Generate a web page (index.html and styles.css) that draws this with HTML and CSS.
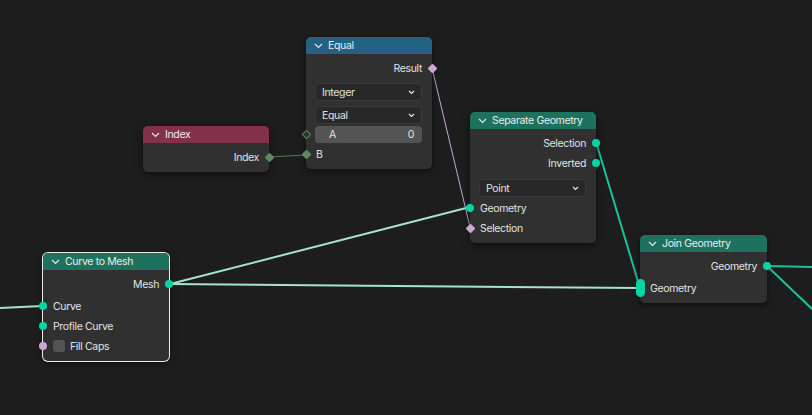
FILE: index.html
```html
<!DOCTYPE html>
<html>
<head>
<meta charset="utf-8">
<link rel="stylesheet" href="styles.css">
</head>
<body>
<div class="canvas">
  <svg class="links" width="812" height="415" viewBox="0 0 812 415">
    <line x1="0" y1="308" x2="42" y2="306" class="l-hi"/>
    <line x1="170" y1="284" x2="470" y2="207" class="l-hi"/>
    <line x1="170" y1="284" x2="640" y2="288" class="l-hi"/>
    <line x1="432" y1="68" x2="470" y2="227" class="l-bool"/>
    <line x1="269" y1="157" x2="306" y2="155" class="l-int"/>
    <line x1="596" y1="142" x2="640" y2="288" class="l-geo"/>
    <line x1="767" y1="266" x2="812" y2="267" class="l-geo"/>
    <line x1="767" y1="266" x2="812" y2="309" class="l-geo"/>
  </svg>

  <!-- Equal -->
  <div class="node n-equal">
    <div class="hdr hdr-conv"><svg class="chev" width="9" height="6" viewBox="0 0 9 6"><path d="M1 1 L4.5 4.5 L8 1"/></svg>Equal</div>
    <div class="body">
      <div class="row out">Result<span class="sock diamond s-bool out-s"></span></div>
      <div class="dd dd-first">Integer<svg class="dchev" width="7" height="5" viewBox="0 0 7 5"><path d="M1 1 L3.5 3.5 L6 1"/></svg></div>
      <div class="dd">Equal<svg class="dchev" width="7" height="5" viewBox="0 0 7 5"><path d="M1 1 L3.5 3.5 L6 1"/></svg></div>
      <div class="frow"><span class="sock diamond hollow in-s"></span><div class="field"><span>A</span><span>0</span></div></div>
      <div class="row">B<span class="sock diamond s-int in-s"></span></div>
    </div>
  </div>

  <!-- Index -->
  <div class="node n-index">
    <div class="hdr hdr-input"><svg class="chev" width="9" height="6" viewBox="0 0 9 6"><path d="M1 1 L4.5 4.5 L8 1"/></svg>Index</div>
    <div class="body">
      <div class="row out">Index<span class="sock diamond s-int out-s"></span></div>
    </div>
  </div>

  <!-- Separate Geometry -->
  <div class="node n-sep">
    <div class="hdr hdr-geo"><svg class="chev" width="9" height="6" viewBox="0 0 9 6"><path d="M1 1 L4.5 4.5 L8 1"/></svg>Separate Geometry</div>
    <div class="body">
      <div class="row out">Selection<span class="sock s-geo out-s"></span></div>
      <div class="row out">Inverted<span class="sock s-geo out-s"></span></div>
      <div class="dd dd-sep">Point<svg class="dchev" width="7" height="5" viewBox="0 0 7 5"><path d="M1 1 L3.5 3.5 L6 1"/></svg></div>
      <div class="row">Geometry<span class="sock s-geo in-s"></span></div>
      <div class="row">Selection<span class="sock diamond s-bool in-s"></span></div>
    </div>
  </div>

  <!-- Curve to Mesh -->
  <div class="node n-ctm selected">
    <div class="hdr hdr-geo"><svg class="chev" width="9" height="6" viewBox="0 0 9 6"><path d="M1 1 L4.5 4.5 L8 1"/></svg>Curve to Mesh</div>
    <div class="body">
      <div class="row out">Mesh<span class="sock s-geo out-s"></span></div>
      <div class="row gap-in">Curve<span class="sock s-geo in-s"></span></div>
      <div class="row">Profile Curve<span class="sock s-geo in-s"></span></div>
      <div class="row"><span class="check"></span>Fill Caps<span class="sock s-bool in-s"></span></div>
    </div>
  </div>

  <!-- Join Geometry -->
  <div class="node n-join">
    <div class="hdr hdr-geo"><svg class="chev" width="9" height="6" viewBox="0 0 9 6"><path d="M1 1 L4.5 4.5 L8 1"/></svg>Join Geometry</div>
    <div class="body">
      <div class="row out">Geometry<span class="sock s-geo out-s"></span></div>
      <div class="row gap-in">Geometry<span class="sock pill s-geo"></span></div>
    </div>
  </div>
</div>
</body>
</html>
```

FILE: styles.css
```css
* { box-sizing: border-box; }
html, body { margin: 0; padding: 0; }
body {
  background: #1d1d1d;
  font-family: Inter, "Noto Sans", "DejaVu Sans", sans-serif;
  font-size: 10.5px;
  letter-spacing: -0.35px;
  color: #e2e2e2;
}
.canvas {
  position: relative;
  width: 812px;
  height: 415px;
  overflow: hidden;
  background: #1d1d1d;
}
.links { position: absolute; left: 0; top: 0; }
.links line { stroke-linecap: round; }
.l-hi { stroke: #a6e3cc; stroke-width: 2; }
.l-geo { stroke: #19c39a; stroke-width: 2; }
.l-bool { stroke: #c9a8d4; stroke-width: 1; }
.l-int { stroke: #55795a; stroke-width: 1.2; }

.node {
  position: absolute;
  width: 126px;
  background: #303030;
  border-radius: 5px;
  box-shadow: 0 2px 7px rgba(0,0,0,0.55);
}
.node.selected { box-shadow: 0 0 0 1px #ececec, 0 2px 7px rgba(0,0,0,0.55); }
.n-equal { left: 306px; top: 37px; }
.n-index { left: 143px; top: 126px; }
.n-sep { left: 470px; top: 112px; }
.n-ctm { left: 43px; top: 253px; width: 126px; }
.n-join { left: 640px; top: 235px; width: 127px; }

.hdr {
  height: 17px;
  display: flex;
  align-items: center;
  gap: 5px;
  padding-left: 8px;
  border-radius: 5px 5px 0 0;
  color: #ececec;
}
.hdr-conv { background: #246283; }
.hdr-input { background: #83314a; }
.hdr-geo { background: #1d725e; }
.chev path, .dchev path { fill: none; stroke: #e6e6e6; stroke-width: 1.2; }
.chev { flex: none; }

.body {
  display: flex;
  flex-direction: column;
  padding: 4px 0 5px;
}
.row {
  position: relative;
  height: 20px;
  display: flex;
  align-items: center;
  padding: 0 10px;
}
.row.out { justify-content: flex-end; }
.gap-in { margin-top: 2px; }

.sock {
  position: absolute;
  width: 8px;
  height: 8px;
  border-radius: 50%;
  top: 6px;
}
.in-s { left: -4px; }
.out-s { right: -4px; }
.s-geo { background: #00d6a3; }
.s-bool { background: #cca6d6; }
.s-int { background: #598c5c; }
.diamond {
  width: 7px;
  height: 7px;
  border-radius: 1px;
  transform: rotate(45deg);
  top: 6.5px;
}
.diamond.in-s { left: -3.5px; }
.diamond.out-s { right: -3.5px; }
.hollow { background: #303030; border: 1.5px solid #598c5c; }
.pill {
  left: -4px;
  top: 1px;
  width: 9px;
  height: 18px;
  border-radius: 5px;
}

.dd {
  position: relative;
  height: 18px;
  margin: 0 10px 0 9px;
  background: #282828;
  border: 1px solid #3a3a3a;
  border-radius: 4px;
  display: flex;
  align-items: center;
  padding-left: 6px;
  color: #e2e2e2;
}
.dd + .dd { margin-top: 5px; }
.dd-first { margin-top: 5px; }
.dd-sep { margin: 6px 10px 1px 9px; }
.dchev { position: absolute; right: 6px; top: 6px; }

.frow {
  position: relative;
  height: 20px;
  display: flex;
  align-items: center;
  padding: 1px 10px 0 9px;
}
.frow .sock { top: 7px; }
.field {
  flex: 1;
  height: 17px;
  background: #545454;
  border-radius: 4px;
  display: flex;
  align-items: center;
  justify-content: space-between;
  padding: 0 8px 0 14px;
}
.check {
  width: 12px;
  height: 12px;
  background: #545454;
  border-radius: 3px;
  margin-right: 5px;
}
```
